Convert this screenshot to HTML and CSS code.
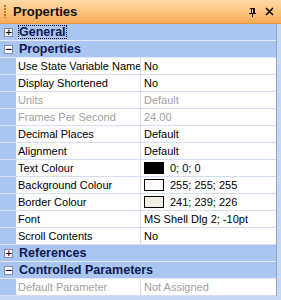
FILE: index.html
```html
<!DOCTYPE html>
<html lang="en">
<head>
  <meta charset="UTF-8" />
  <title>Properties</title>
  <link rel="stylesheet" href="styles.css">
</head>
<body>
  <div class="panel">
    <!-- Title bar -->
    <div class="titlebar">
      <span class="grip"></span>
      <span class="title">Properties</span>
      <svg class="pin" width="9" height="10" viewBox="0 0 9 10">
        <path d="M2 1h5M3 1v5M6 1v5M5 1v5M1 6h7M4.5 6v4" stroke="#000" stroke-width="1" fill="none" shape-rendering="crispEdges"/>
      </svg>
      <svg class="close" width="9" height="9" viewBox="0 0 9 9">
        <path d="M1 1l7 7M8 1l-7 7" stroke="#000" stroke-width="1.6" fill="none"/>
      </svg>
    </div>

    <!-- Property grid -->
    <div class="grid">
      <div class="group">
        <span class="toggle">+</span><span class="group-name focused">General</span>
      </div>
      <div class="group">
        <span class="toggle">&minus;</span><span class="group-name">Properties</span>
      </div>
      <div class="row"><span class="gutter"></span><span class="name">Use State Variable Name</span><span class="value">No</span></div>
      <div class="row"><span class="gutter"></span><span class="name">Display Shortened</span><span class="value">No</span></div>
      <div class="row disabled"><span class="gutter"></span><span class="name">Units</span><span class="value">Default</span></div>
      <div class="row disabled"><span class="gutter"></span><span class="name">Frames Per Second</span><span class="value">24.00</span></div>
      <div class="row"><span class="gutter"></span><span class="name">Decimal Places</span><span class="value">Default</span></div>
      <div class="row"><span class="gutter"></span><span class="name">Alignment</span><span class="value">Default</span></div>
      <div class="row"><span class="gutter"></span><span class="name">Text Colour</span><span class="value"><i class="swatch swatch-black"></i>0; 0; 0</span></div>
      <div class="row"><span class="gutter"></span><span class="name">Background Colour</span><span class="value"><i class="swatch swatch-white"></i>255; 255; 255</span></div>
      <div class="row"><span class="gutter"></span><span class="name">Border Colour</span><span class="value"><i class="swatch swatch-beige"></i>241; 239; 226</span></div>
      <div class="row"><span class="gutter"></span><span class="name">Font</span><span class="value">MS Shell Dlg 2; -10pt</span></div>
      <div class="row"><span class="gutter"></span><span class="name">Scroll Contents</span><span class="value">No</span></div>
      <div class="group">
        <span class="toggle">+</span><span class="group-name">References</span>
      </div>
      <div class="group">
        <span class="toggle">&minus;</span><span class="group-name">Controlled Parameters</span>
      </div>
      <div class="row disabled"><span class="gutter"></span><span class="name">Default Parameter</span><span class="value">Not Assigned</span></div>
    </div>
  </div>
</body>
</html>
```

FILE: styles.css
```css
body {
  margin: 0;
  background: #c6d8f4;
  font-family: "Liberation Sans", Arial, sans-serif;
  font-size: 11px;
  color: #000;
}

.panel {
  width: 281px;
  height: 300px;
  overflow: hidden;
}

/* Title bar */
.titlebar {
  height: 23px;
  display: flex;
  align-items: center;
  background: linear-gradient(#fedca6, #fbc27c 55%, #f7ab55);
  border-bottom: 1px solid #e59a45;
}

.grip {
  width: 2px;
  height: 13px;
  margin: 0 7px 0 4px;
  background: repeating-linear-gradient(#c8741a 0 2px, transparent 2px 3px);
}

.title {
  flex: 1;
  font-weight: bold;
  font-size: 13px;
  color: #111;
}

.pin {
  margin-right: 8px;
}

.close {
  margin-right: 7px;
}

/* Grid */
.grid {
  width: 276px;
  border-right: 1px solid #8fa6c8;
  background: #fff;
}

.group {
  height: 16px;
  display: flex;
  align-items: center;
  background: #a9c5f0;
  border-bottom: 1px solid #e4ecf9;
  font-weight: bold;
  font-size: 12.5px;
  color: #0c1a52;
  white-space: nowrap;
}

.toggle {
  width: 7px;
  height: 7px;
  margin: 0 5px 0 4px;
  border: 1px solid #7f8ea8;
  background: #fff;
  font-family: "DejaVu Sans", sans-serif;
  font-size: 9px;
  line-height: 6px;
  text-align: center;
  color: #000;
  font-weight: bold;
  flex: none;
}

.group-name {
  padding: 0 1px;
}

.focused {
  outline: 1px dotted #000;
  outline-offset: -1px;
}

.row {
  height: 16px;
  display: flex;
  border-bottom: 1px solid #d3def0;
  white-space: nowrap;
}

.gutter {
  width: 16px;
  background: #a9c5f0;
  flex: none;
}

.name {
  width: 122px;
  padding-left: 2px;
  border-right: 1px solid #d3def0;
  line-height: 16px;
  overflow: hidden;
  flex: none;
}

.value {
  flex: 1;
  padding-left: 3px;
  line-height: 16px;
  display: flex;
  align-items: center;
}

.disabled {
  color: #a0a0a0;
}

.swatch {
  width: 20px;
  height: 12px;
  margin-right: 6px;
  border: 1px solid #000;
  box-sizing: border-box;
}

.swatch-black { background: #000; }
.swatch-white { background: #fff; }
.swatch-beige { background: #f1efe2; }
```
